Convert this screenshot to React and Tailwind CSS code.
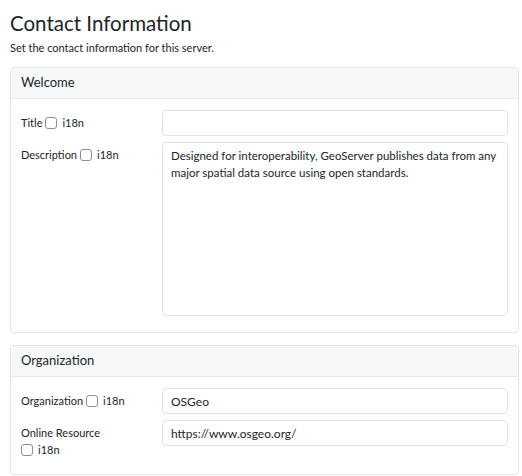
import { useState } from 'react'

function I18nCheck({ checked, onChange }) {
  return (
    <label className="inline-flex items-center gap-[5px] cursor-pointer">
      <input type="checkbox" checked={checked} onChange={onChange} className="peer sr-only" />
      <span className="w-[12px] h-[12px] rounded-[3px] border border-[#8f8f8f] bg-white peer-checked:bg-[#0d6efd] peer-checked:border-[#0d6efd]" />
      <span>i18n</span>
    </label>
  )
}

function Card({ title, children }) {
  return (
    <div className="border border-[#e3e5e8] rounded-[4px] bg-white">
      <div className="bg-[#f7f8fa] border-b border-[#e7e9ec] px-[10px] h-[31px] flex items-center text-[13px] rounded-t-[4px]">
        {title}
      </div>
      <div className="pt-[11px] pb-[16px] px-[10px] flex flex-col gap-[6px]">{children}</div>
    </div>
  )
}

function Row({ label, inline = true, children }) {
  const [i18n, setI18n] = useState(false)
  return (
    <div className="grid grid-cols-[141px_1fr] items-start">
      <div className="pt-[4px] leading-[17px] text-[11px]">
        {inline ? (
          <span className="inline-flex items-center gap-[3px]">
            {label} <I18nCheck checked={i18n} onChange={() => setI18n(!i18n)} />
          </span>
        ) : (
          <div className="flex flex-col">
            <span>{label}</span>
            <I18nCheck checked={i18n} onChange={() => setI18n(!i18n)} />
          </div>
        )}
      </div>
      {children}
    </div>
  )
}

const inputCls =
  'w-full h-[26px] px-[8px] border border-[#e1e3e6] rounded-[4px] bg-white text-[12px] text-[#212529] outline-none'

export default function App() {
  const [title, setTitle] = useState('')
  const [desc, setDesc] = useState(
    'Designed for interoperability, GeoServer publishes data from any major spatial data source using open standards.'
  )
  const [org, setOrg] = useState('OSGeo')
  const [url, setUrl] = useState('https://www.osgeo.org/')

  return (
    <div className="w-[522px] h-[476px] bg-white text-[#212529] text-[12px] font-['Lato',sans-serif] px-[10px] pr-[3px] overflow-hidden">
      <h1 className="text-[20.5px] leading-[28px] pt-[9px]">Contact Information</h1>
      <p className="text-[11px] mt-[3px] leading-[15px]">Set the contact information for this server.</p>

      <div className="mt-[12px] flex flex-col gap-[12px]">
        <Card title="Welcome">
          <Row label="Title">
            <input className={inputCls} value={title} onChange={e => setTitle(e.target.value)} />
          </Row>
          <Row label="Description">
            <textarea
              className="w-full h-[174px] pl-[8px] pr-[2px] py-[4px] border border-[#e1e3e6] rounded-[4px] text-[11.5px] leading-[17px] resize-none outline-none"
              value={desc}
              onChange={e => setDesc(e.target.value)}
            />
          </Row>
        </Card>

        <Card title="Organization">
          <Row label="Organization">
            <input className={inputCls} value={org} onChange={e => setOrg(e.target.value)} />
          </Row>
          <Row label="Online Resource" inline={false}>
            <input className={inputCls} value={url} onChange={e => setUrl(e.target.value)} />
          </Row>
        </Card>
      </div>
    </div>
  )
}
